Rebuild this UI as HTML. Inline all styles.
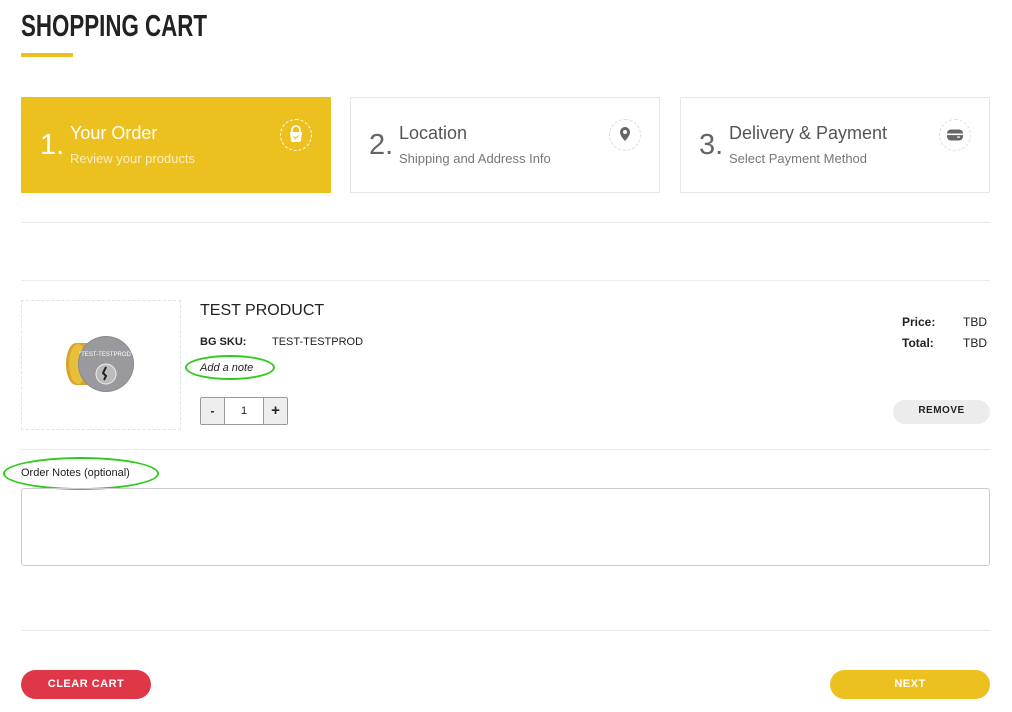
<!DOCTYPE html>
<html><head><style>
*{box-sizing:border-box;margin:0;padding:0}
body{width:1012px;height:712px;background:#fff;font-family:"Liberation Sans",sans-serif;color:#222;position:relative;overflow:hidden}
.a{position:absolute}
.title{left:21px;top:8px;font-family:"Liberation Sans Narrow","Liberation Sans",sans-serif;font-weight:bold;font-size:31px;color:#222;transform:scaleX(.72);transform-origin:left}
.ul{left:21px;top:53px;width:52px;height:4px;background:#ecc01f}
.step{top:97px;height:96px;width:310px;border:1px solid #e6e6e6;background:#fff}
.step .n{position:absolute;left:18px;top:31px;font-size:29px;color:#666;font-weight:300}
.step .h{position:absolute;left:48px;top:25px;font-size:18px;color:#555}
.step .s{position:absolute;left:48px;top:53px;font-size:13px;color:#777}
.step .ic{position:absolute;right:18px;top:21px;width:32px;height:32px;border:1px dashed #ddd;border-radius:50%}
.y{background:#ecc01f;border-color:#ecc01f}
.y .n,.y .h{color:#fff}.y .s{color:#fbeec0}.y .ic{border-color:#fff}
.line{left:21px;width:969px;height:1px;background:#eaeaea}
.sm{font-size:11px}
.btn{border-radius:15px;height:29px;font-weight:bold;font-size:11px;text-align:center;line-height:29px;letter-spacing:.5px}
</style></head><body>
<div class="a title">SHOPPING CART</div>
<div class="a ul"></div>
<div class="a step y" style="left:21px"><div class="n">1.</div><div class="h">Your Order</div><div class="s">Review your products</div>
<div class="ic"><svg width="30" height="30" viewBox="0 0 30 30"><path d="M11 12v-2a4 4 0 0 1 8 0v2" stroke="#fff" stroke-width="1.6" fill="none"/><path d="M9 12h12l-1 8a2 2 0 0 1-2 2h-6a2 2 0 0 1-2-2z" fill="#fff"/><path d="M12.5 16.5l2 2 3-3" stroke="#ecc01f" stroke-width="1.2" fill="none"/></svg></div></div>
<div class="a step" style="left:350px"><div class="n">2.</div><div class="h">Location</div><div class="s">Shipping and Address Info</div>
<div class="ic"><svg width="30" height="30" viewBox="0 0 30 30"><path d="M15 7a5 5 0 0 0-5 5c0 4 5 9 5 9s5-5 5-9a5 5 0 0 0-5-5z" fill="#666"/><circle cx="15" cy="12" r="2" fill="#fff"/></svg></div></div>
<div class="a step" style="left:680px"><div class="n">3.</div><div class="h">Delivery &amp; Payment</div><div class="s">Select Payment Method</div>
<div class="ic"><svg width="30" height="30" viewBox="0 0 30 30"><rect x="7" y="9.5" width="16" height="11" rx="4" fill="#666"/><rect x="7" y="13.5" width="16" height="1.6" fill="#fff"/><rect x="17" y="16.5" width="3" height="1.2" fill="#fff"/></svg></div></div>
<div class="a line" style="top:222px"></div>
<div class="a line" style="top:280px"></div>
<div class="a" style="left:21px;top:300px;width:160px;height:130px;border:1px dashed #e2e2e2">
<svg class="a" style="left:40px;top:28px" width="80" height="70" viewBox="0 0 80 70"><path d="M14 14h22v42H14a10 21 0 0 1 0-42z" fill="#d4a52a"/><ellipse cx="16" cy="35" rx="9" ry="20" fill="#e8bf3a"/><circle cx="44" cy="35" r="28" fill="#888"/><circle cx="44" cy="35" r="27" fill="#9a9a9e"/><text x="44" y="27" font-size="6" fill="#fff" text-anchor="middle" font-family="Liberation Sans">"TEST-TESTPROD"</text><circle cx="44" cy="45" r="10" fill="#bbb" stroke="#eee"/><path d="M44 38l-3 6 3 3-2 4" stroke="#222" stroke-width="2" fill="none"/></svg></div>
<div class="a" style="left:200px;top:302px;font-size:16px;color:#222">TEST PRODUCT</div>
<div class="a sm" style="left:200px;top:336px;font-weight:bold">BG SKU:</div>
<div class="a sm" style="left:272px;top:336px">TEST-TESTPROD</div>
<div class="a" style="left:185px;top:355px;width:90px;height:25px;border:2.5px solid #2ecc1a;border-radius:50%"></div>
<div class="a sm" style="left:200px;top:362px;font-style:italic">Add a note</div>
<div class="a" style="left:200px;top:397px;width:88px;height:28px;border:1px solid #999;border-radius:2px;display:flex;font-size:12px">
<div style="width:23px;background:#eee;text-align:center;line-height:26px;font-weight:bold">-</div>
<div style="flex:1;border-left:1px solid #999;border-right:1px solid #999;text-align:center;line-height:26px;font-size:11px">1</div>
<div style="width:23px;background:#eee;text-align:center;line-height:26px;font-weight:bold;font-size:15px">+</div></div>
<div class="a" style="left:902px;top:312px;font-size:12px;font-weight:bold;line-height:21px">Price:<br>Total:</div>
<div class="a" style="left:963px;top:312px;font-size:12px;line-height:21px">TBD<br>TBD</div>
<div class="a btn" style="left:893px;top:400px;width:97px;height:24px;line-height:22px;background:#ececec;font-size:10px">REMOVE</div>
<div class="a line" style="top:449px"></div>
<div class="a" style="left:3px;top:457px;width:156px;height:33px;border:2.5px solid #2ecc1a;border-radius:50%"></div>
<div class="a sm" style="left:21px;top:467px">Order Notes (optional)</div>
<div class="a" style="left:21px;top:488px;width:969px;height:78px;border:1px solid #ccc;border-radius:3px"></div>
<div class="a line" style="top:630px"></div>
<div class="a btn" style="left:21px;top:670px;width:130px;background:#df3648;color:#fff">CLEAR CART</div>
<div class="a btn" style="left:830px;top:670px;width:160px;background:#ecc01f;color:#fff">NEXT</div>
</body></html>
